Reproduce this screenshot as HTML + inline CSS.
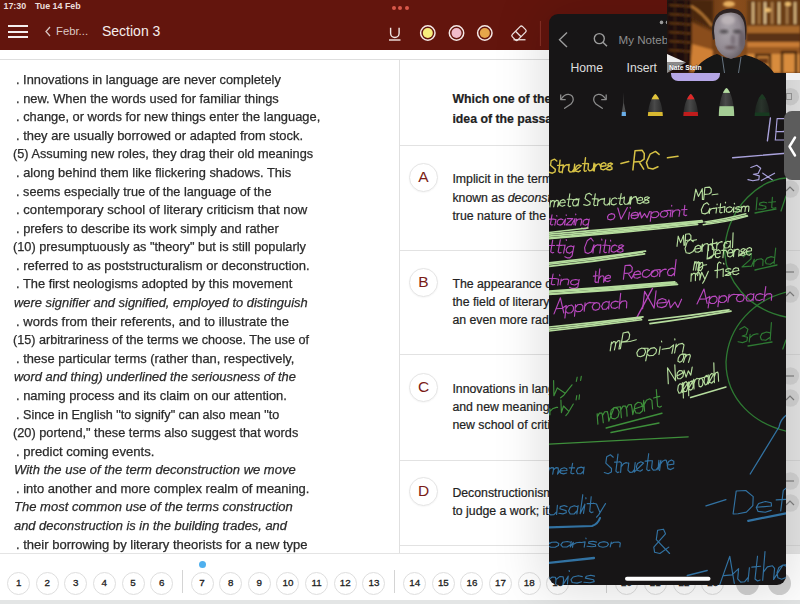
<!DOCTYPE html>
<html><head><meta charset="utf-8">
<style>
*{margin:0;padding:0;box-sizing:border-box}
html,body{width:800px;height:604px;overflow:hidden;background:#e3e5e5;font-family:"Liberation Sans",sans-serif;position:relative}
.abs{position:absolute}
#hdr{left:0;top:0;width:800px;height:50px;background:#63150d}
#strip{left:0;top:50px;width:800px;height:10px;background:#fff;border-bottom:1px solid #dedede}
#passage{left:0;top:60px;width:399px;height:493px;background:#fff}
#vdiv{left:399px;top:60px;width:1px;height:493px;background:#e0e0e0}
#qpanel{left:400px;top:60px;width:388px;height:493px;background:#fff}
.pl{position:absolute;transform-origin:0 0;font-size:12.6px;color:#2b2b2b;-webkit-text-stroke:0.25px #2b2b2b;white-space:nowrap;line-height:15px}
#nav{left:0;top:553px;width:800px;height:47px;background:#fff;border-top:1px solid #e4e4e4}
.nc{position:absolute;width:23px;height:23px;border-radius:50%;border:1.6px solid #dedede;font-size:9.8px;color:#222;-webkit-text-stroke:0.3px #222;text-align:center;line-height:20.5px;top:571.5px}
.st{position:absolute;color:#ecdedb;font-weight:bold;font-size:8.6px;top:0;line-height:12px}
.sep{position:absolute;left:400px;width:388px;height:1px;background:#e2e2e2}
.ql{position:absolute;font-size:12.3px;color:#222;-webkit-text-stroke:0.2px #222;white-space:nowrap;line-height:15px;left:452px}
.lc{position:absolute;width:29px;height:29px;border-radius:50%;border:1.5px solid #e4e4e4;color:#7a1c16;font-size:15.5px;text-align:center;line-height:26px;left:409px;box-shadow:0 0.5px 1.5px rgba(0,0,0,0.06)}
#panel{left:549px;top:14px;width:237px;height:571px;background:#171516;border-radius:9px;box-shadow:0 0 50px 8px rgba(0,0,0,0.13);overflow:hidden}
</style></head><body>
<div id="hdr" class="abs">
  <div class="st" style="left:3.5px;top:-0.3px;font-size:8.9px">17:30</div>
  <div class="st" style="left:35px;top:-0.3px;font-size:8.9px">Tue 14 Feb</div>
  <div class="abs" style="left:391.5px;top:5.5px;width:4px;height:4px;border-radius:50%;background:#d9584a"></div>
  <div class="abs" style="left:398px;top:5.5px;width:4px;height:4px;border-radius:50%;background:#d9584a"></div>
  <div class="abs" style="left:404.5px;top:5.5px;width:4px;height:4px;border-radius:50%;background:#d9584a"></div>
  <div class="abs" style="left:7.5px;top:25.4px;width:20px;height:2px;background:#f4eeee"></div>
  <div class="abs" style="left:7.5px;top:30.8px;width:20px;height:2px;background:#f4eeee"></div>
  <div class="abs" style="left:7.5px;top:36.3px;width:20px;height:2px;background:#f4eeee"></div>
  <svg class="abs" style="left:44px;top:26px" width="8" height="11"><path d="M6 1 L2 5.5 L6 10" stroke="#d8c4c0" stroke-width="1.3" fill="none"/></svg>
  <div class="abs" style="left:56px;top:25px;font-size:11.3px;color:#dcc8c4;line-height:13px">Febr...</div>
  <div class="abs" style="left:102px;top:23px;font-size:14px;color:#f6eeec;line-height:16px">Section 3</div>
  <svg class="abs" style="left:380px;top:15px" width="170" height="35">
    <path d="M10.6 12.7 V18.3 a4.25 4.25 0 0 0 8.5 0 V12.7" stroke="#f2e6e4" stroke-width="1.4" fill="none"/>
    <path d="M9 25 H20.5" stroke="#f2e6e4" stroke-width="1.4"/>
    <circle cx="47.8" cy="18" r="7.2" stroke="#f4e8e6" stroke-width="1.5" fill="none"/><circle cx="47.8" cy="18" r="5" fill="#f7ee7c"/>
    <circle cx="76.5" cy="18" r="7.2" stroke="#f4e8e6" stroke-width="1.5" fill="none"/><circle cx="76.5" cy="18" r="5" fill="#f1bccb"/>
    <circle cx="104.8" cy="18" r="7.2" stroke="#f4e8e6" stroke-width="1.5" fill="none"/><circle cx="104.8" cy="18" r="5" fill="#e6a64a"/>
    <g transform="translate(139 18.25) rotate(-45)"><rect x="-7.25" y="-3.9" width="14.5" height="7.8" rx="1.8" stroke="#f2e6e4" stroke-width="1.3" fill="none"/><path d="M-1 -3.9 V3.9" stroke="#f2e6e4" stroke-width="1.3"/></g>
    <path d="M133.5 24.75 H145.5" stroke="#f2e6e4" stroke-width="1.3"/>
    <path d="M160.4 6 V31" stroke="#8c3328" stroke-width="1"/>
  </svg>
</div>
<div id="strip" class="abs"></div>
<div id="passage" class="abs"></div>
<div id="vdiv" class="abs"></div>
<div id="qpanel" class="abs"></div>
<div class="pl" style="left:16.1px;top:73.08px;transform:scaleX(1.0167)">. Innovations in language are never completely</div>
<div class="pl" style="left:16.1px;top:91.66px;transform:scaleX(1.02)">. new. When the words used for familiar things</div>
<div class="pl" style="left:16.1px;top:110.24px;transform:scaleX(1.0224)">. change, or words for new things enter the language,</div>
<div class="pl" style="left:16.1px;top:128.82px;transform:scaleX(1.025)">. they are usually borrowed or adapted from stock.</div>
<div class="pl" style="left:13px;top:147.40px;transform:scaleX(1.0112)">(5) Assuming new roles, they drag their old meanings</div>
<div class="pl" style="left:16.1px;top:165.98px;transform:scaleX(1.0195)">. along behind them like flickering shadows. This</div>
<div class="pl" style="left:16.1px;top:184.56px;transform:scaleX(1.008)">. seems especially true of the language of the</div>
<div class="pl" style="left:16.1px;top:203.14px;transform:scaleX(1.0433)">. contemporary school of literary criticism that now</div>
<div class="pl" style="left:16.1px;top:221.72px;transform:scaleX(1.02)">. prefers to describe its work simply and rather</div>
<div class="pl" style="left:13px;top:240.30px;transform:scaleX(1.0139)">(10) presumptuously as "theory" but is still popularly</div>
<div class="pl" style="left:16.1px;top:258.88px;transform:scaleX(1.0335)">. referred to as poststructuralism or deconstruction.</div>
<div class="pl" style="left:16.1px;top:277.46px;transform:scaleX(1.0209)">. The first neologisms adopted by this movement</div>
<div class="pl" style="left:14px;top:296.04px;font-style:italic;transform:scaleX(1.0232)">were signifier and signified, employed to distinguish</div>
<div class="pl" style="left:16.1px;top:314.62px;transform:scaleX(1.0341)">. words from their referents, and to illustrate the</div>
<div class="pl" style="left:13px;top:333.20px;transform:scaleX(1.0027)">(15) arbitrariness of the terms we choose. The use of</div>
<div class="pl" style="left:16.1px;top:351.78px;transform:scaleX(1.0204)">. these particular terms (rather than, respectively,</div>
<div class="pl" style="left:14px;top:370.36px;font-style:italic;transform:scaleX(1.022)">word and thing) underlined the seriousness of the</div>
<div class="pl" style="left:16.1px;top:388.94px;transform:scaleX(1.0265)">. naming process and its claim on our attention.</div>
<div class="pl" style="left:16.1px;top:407.52px;transform:scaleX(1.0023)">. Since in English "to signify" can also mean "to</div>
<div class="pl" style="left:13px;top:426.10px;transform:scaleX(1.0129)">(20) portend," these terms also suggest that words</div>
<div class="pl" style="left:16.1px;top:444.68px;transform:scaleX(1.0403)">. predict coming events.</div>
<div class="pl" style="left:14px;top:463.26px;font-style:italic;transform:scaleX(1.0321)">With the use of the term deconstruction we move</div>
<div class="pl" style="left:16.1px;top:481.84px;transform:scaleX(1.0299)">. into another and more complex realm of meaning.</div>
<div class="pl" style="left:14px;top:500.42px;font-style:italic;transform:scaleX(1.0345)">The most common use of the terms construction</div>
<div class="pl" style="left:13.5px;top:519.00px;font-style:italic;transform:scaleX(1.0233)">and deconstruction is in the building trades, and</div>
<div class="pl" style="left:16.1px;top:537.58px;transform:scaleX(1.0337)">. their borrowing by literary theorists for a new type</div>
<div class="sep" style="top:145.0px"></div>
<div class="sep" style="top:250.0px"></div>
<div class="sep" style="top:354.2px"></div>
<div class="sep" style="top:459.5px"></div>
<div class="sep" style="top:545.0px"></div>
<div class="ql" style="left:452.4px;top:92.10px;font-weight:bold">Which one of the following most accurately</div>
<div class="ql" style="left:452.4px;top:111.90px;font-weight:bold">idea of the passage?</div>
<div class="lc" style="top:163.1px">A</div>
<div class="ql" style="left:452.4px;top:172.20px;">Implicit in the term construction is</div>
<div class="ql" style="left:452.4px;top:190.90px;">known as <i>deconstruction</i> and</div>
<div class="ql" style="left:452.4px;top:208.80px;">true nature of the word</div>
<div class="lc" style="top:267.8px">B</div>
<div class="ql" style="left:452.4px;top:276.80px;">The appearance of new words</div>
<div class="ql" style="left:452.4px;top:295.40px;">the field of literary criticism</div>
<div class="ql" style="left:452.4px;top:313.40px;">an even more radical</div>
<div class="lc" style="top:372.9px">C</div>
<div class="ql" style="left:452.4px;top:381.70px;">Innovations in language</div>
<div class="ql" style="left:452.4px;top:399.80px;">and new meanings</div>
<div class="ql" style="left:452.4px;top:418.00px;">new school of criticism</div>
<div class="lc" style="top:476.7px">D</div>
<div class="ql" style="left:452.4px;top:486.00px;">Deconstructionism</div>
<div class="ql" style="left:452.4px;top:504.40px;">to judge a work; it</div>
<div class="abs" style="left:786px;top:80px;width:14px;height:473px;background:#e6e6e6"></div>
<div class="abs" style="left:786px;top:145.0px;width:14px;height:1px;background:#d6d6d6"></div>
<div class="abs" style="left:786px;top:250.0px;width:14px;height:1px;background:#d6d6d6"></div>
<div class="abs" style="left:786px;top:354.2px;width:14px;height:1px;background:#d6d6d6"></div>
<div class="abs" style="left:786px;top:459.5px;width:14px;height:1px;background:#d6d6d6"></div>
<div class="abs" style="left:786px;top:545.0px;width:14px;height:1px;background:#d6d6d6"></div>
<svg class="abs" style="left:770px;top:60px" width="30" height="494" viewBox="770 60 30 494">
<circle cx="790.4" cy="96.7" r="8.7" fill="#d2d2d2"/><rect x="786.5" y="93.5" width="5" height="6" fill="none" stroke="#9a9a9a" stroke-width="1"/>
<circle cx="790.4" cy="167" r="8.7" fill="#d4d4d4"/><path d="M786 167 H794" stroke="#808080" stroke-width="1.2"/>
<circle cx="790.4" cy="189" r="8.7" fill="#d4d4d4"/><path d="M786 191 L790 187 L794 191" stroke="#808080" stroke-width="1.2" fill="none"/>
<circle cx="790.4" cy="272" r="8.7" fill="#d4d4d4"/><path d="M786 272 H794" stroke="#808080" stroke-width="1.2"/>
<circle cx="790.4" cy="294" r="8.7" fill="#d4d4d4"/><path d="M786 296 L790 292 L794 296" stroke="#808080" stroke-width="1.2" fill="none"/>
<circle cx="790.4" cy="376" r="8.7" fill="#d4d4d4"/><path d="M786 376 H794" stroke="#808080" stroke-width="1.2"/>
<circle cx="790.4" cy="398" r="8.7" fill="#d4d4d4"/><path d="M786 400 L790 396 L794 400" stroke="#808080" stroke-width="1.2" fill="none"/>
<circle cx="790.4" cy="481" r="8.7" fill="#d4d4d4"/><path d="M786 481 H794" stroke="#808080" stroke-width="1.2"/>
<circle cx="790.4" cy="503" r="8.7" fill="#d4d4d4"/><path d="M786 505 L790 501 L794 505" stroke="#808080" stroke-width="1.2" fill="none"/>
</svg>
<div id="nav" class="abs"></div>
<div class="nc" style="left:7.25px">1</div>
<div class="nc" style="left:35.70px">2</div>
<div class="nc" style="left:64.30px">3</div>
<div class="nc" style="left:92.80px">4</div>
<div class="nc" style="left:121.50px">5</div>
<div class="nc" style="left:150.20px">6</div>
<div class="nc" style="left:190.50px">7</div>
<div class="nc" style="left:219.15px">8</div>
<div class="nc" style="left:247.80px">9</div>
<div class="nc" style="left:276.45px">10</div>
<div class="nc" style="left:305.10px">11</div>
<div class="nc" style="left:333.75px">12</div>
<div class="nc" style="left:362.40px">13</div>
<div class="nc" style="left:403.25px">14</div>
<div class="nc" style="left:431.85px">15</div>
<div class="nc" style="left:460.45px">16</div>
<div class="nc" style="left:489.05px">17</div>
<div class="nc" style="left:517.65px">18</div>
<div class="nc" style="left:546.25px">19</div>
<div class="nc" style="left:615.00px">20</div>
<div class="nc" style="left:643.75px">21</div>
<div class="nc" style="left:672.50px">22</div>
<div class="nc" style="left:701.25px">23</div>
<div class="abs" style="left:182.1px;top:570px;width:1px;height:23px;background:#d4d4d4"></div>
<div class="abs" style="left:394.0px;top:570px;width:1px;height:23px;background:#d4d4d4"></div>
<div class="abs" style="left:198.5px;top:560.8px;width:7px;height:7px;border-radius:50%;background:#4fb0ee"></div>
<div class="abs" style="left:736.0px;top:571.5px;width:23px;height:23px;border-radius:50%;background:#d2d2d2"></div>
<div class="abs" style="left:767.5px;top:571.5px;width:23px;height:23px;border-radius:50%;background:#d2d2d2"></div>
<div class="abs" style="left:605.5px;top:570px;width:1px;height:23px;background:#d4d4d4"></div>
<div id="panel" class="abs">
<svg class="abs" style="left:0;top:0" width="237" height="571" viewBox="549 14 237 571">
<circle cx="661.5" cy="22.4" r="1.8" fill="#9a9a9a"/>
<circle cx="667.5" cy="22.4" r="1.8" fill="#9a9a9a"/>
<path d="M567 32.5 L559.5 39.8 L567 47" stroke="#9c9c9c" stroke-width="1.4" fill="none"/>
<circle cx="599.3" cy="38.6" r="5" stroke="#9c9c9c" stroke-width="1.4" fill="none"/><path d="M602.9 42.2 L607 46.3" stroke="#9c9c9c" stroke-width="1.5"/>
<text x="618.5" y="44.2" font-family="Liberation Sans" font-size="11.6" fill="#8e8e8e">My Notebook</text>
<text x="570.5" y="72" font-family="Liberation Sans" font-size="12.2" fill="#dedede">Home</text>
<text x="626.5" y="72" font-family="Liberation Sans" font-size="12.2" fill="#dedede">Insert</text>
<path d="M560.7 94.6 V99.6 H565.7" stroke="#8c8c8c" stroke-width="1.3" fill="none" stroke-linejoin="round"/>
<path d="M561.2 99 Q564.5 94 568.5 94.3 Q573.5 95 573.2 100 Q573 102 571 104 L564.6 108.3" stroke="#8c8c8c" stroke-width="1.3" fill="none" stroke-linecap="round"/>
<path d="M606.2 94.6 V99.6 H601.2" stroke="#8c8c8c" stroke-width="1.3" fill="none" stroke-linejoin="round"/>
<path d="M605.7 99 Q602.4 94 598.4 94.3 Q593.4 95 593.7 100 Q593.9 102 595.9 104 L602.3 108.3" stroke="#8c8c8c" stroke-width="1.3" fill="none" stroke-linecap="round"/>
<path d="M623.6 92 L623.9 103 L625.8 112.5 L621.8 112.5 L623.3 103 Z" fill="#505050"/><path d="M621.8 112 L625.8 112 L626 116 L621.6 116 Z" fill="#6aaee8"/>
<defs><linearGradient id="pg" x1="0" x2="1"><stop offset="0" stop-color="#252525"/><stop offset="0.45" stop-color="#4a4a4a"/><stop offset="1" stop-color="#262626"/></linearGradient><linearGradient id="pg2" x1="0" x2="1"><stop offset="0" stop-color="#1a221c"/><stop offset="0.45" stop-color="#2a342c"/><stop offset="1" stop-color="#1a201c"/></linearGradient></defs>
<clipPath id="pc1"><path d="M655.3499999999999 93.9 C656.8499999999999 94.4 662.5 101.9 662.8 116 L647.9 116 C648.1999999999999 101.9 653.8499999999999 94.4 655.3499999999999 93.9 Z"/></clipPath><g clip-path="url(#pc1)"><rect x="646.9" y="92.9" width="16.899999999999977" height="24.099999999999994" fill="url(#pg)"/><rect x="646.9" y="92.9" width="16.899999999999977" height="6.3999999999999915" fill="#e2c43a"/><rect x="646.9" y="112" width="16.899999999999977" height="4" fill="#d8b830"/></g>
<clipPath id="pc2"><path d="M690.75 93.9 C692.25 94.4 697.8000000000001 101.9 698.1 116 L683.4 116 C683.6999999999999 101.9 689.25 94.4 690.75 93.9 Z"/></clipPath><g clip-path="url(#pc2)"><rect x="682.4" y="92.9" width="16.700000000000045" height="24.099999999999994" fill="url(#pg)"/><rect x="682.4" y="92.9" width="16.700000000000045" height="6.3999999999999915" fill="#e02828"/><rect x="682.4" y="112" width="16.700000000000045" height="4" fill="#c01c1c"/></g>
<clipPath id="pc3"><path d="M726.5 88.1 C728.0 88.6 733.9000000000001 96.1 734.2 116 L718.8 116 C719.0999999999999 96.1 725.0 88.6 726.5 88.1 Z"/></clipPath><g clip-path="url(#pc3)"><rect x="717.8" y="87.1" width="17.40000000000009" height="29.900000000000006" fill="url(#pg)"/><rect x="717.8" y="87.1" width="17.40000000000009" height="5.800000000000011" fill="#b4dca0"/><rect x="717.8" y="106.2" width="17.40000000000009" height="9.799999999999997" fill="#a4cc94"/></g>
<clipPath id="pc4"><path d="M762.1500000000001 94.3 C763.6500000000001 94.8 769.3000000000001 102.3 769.6 116 L754.7 116 C755.0 102.3 760.6500000000001 94.8 762.1500000000001 94.3 Z"/></clipPath><g clip-path="url(#pc4)"><rect x="753.7" y="93.3" width="16.899999999999977" height="23.700000000000003" fill="url(#pg2)"/><rect x="753.7" y="93.3" width="16.899999999999977" height="6.0" fill="#1c3a22"/><rect x="753.7" y="112.5" width="16.899999999999977" height="3.5" fill="#173a20"/></g>
<path d="M556.8,161.0 554.6,159.2 551.2,160.7 550.5,165.3 555.4,169.4 555.0,171.9 552.4,173.2 548.9,172.3 M560.1,160.2 558.9,171.3 559.9,172.3 561.2,171.9 M557.6,165.4 561.5,165.2 M561.5,165.2 563.4,164.9 M563.4,164.9 562.2,172.7 M562.8,168.4 565.0,165.6 566.9,164.7 567.7,165.0 M567.7,165.0 569.2,164.4 M569.2,164.4 568.5,170.2 570.0,172.0 572.1,171.9 573.8,169.5 M574.7,164.1 573.8,171.8 M573.8,171.8 581.2,165.8 M581.2,165.8 579.0,164.9 576.5,166.1 575.4,168.5 575.7,171.1 578.4,171.8 580.3,170.7 M585.5,157.8 584.0,170.2 584.8,171.3 586.3,170.8 M582.5,163.6 586.9,163.4 M586.9,163.4 588.5,163.6 M588.5,163.6 588.0,169.0 589.4,170.7 591.2,170.6 593.1,168.4 M594.0,163.3 593.1,170.5 M593.1,170.5 595.1,164.1 M595.1,164.1 594.2,171.0 M594.7,167.2 596.8,164.7 598.6,163.9 599.5,164.2 M599.5,164.2 600.6,166.5 M600.6,166.5 606.0,165.8 605.8,163.7 603.9,162.7 601.4,163.9 600.6,166.5 601.0,169.2 603.4,169.9 605.8,168.7 M605.8,168.7 612.5,163.9 M612.5,163.9 610.7,163.0 608.3,163.8 607.8,165.6 611.8,167.2 612.1,169.0 609.6,170.0 607.0,169.5" stroke="#d6c145" stroke-width="1.4" fill="none" stroke-linecap="round" stroke-linejoin="round"/>
<path d="M621 163.5 L628.7 161.5" stroke="#d6c145" stroke-width="1.6" fill="none" stroke-linecap="round" stroke-linejoin="round"/>
<path d="M632.9,169.9 635.0,150.8 642.2,150.3 644.3,153.7 644.1,159.1 640.9,161.4 633.8,161.9 M638.9,161.5 643.7,169.2 M659.1,154.4 655.5,151.4 650.1,154.2 646.4,162.6 648.2,168.0 652.9,169.0 658.0,166.8" stroke="#d6c145" stroke-width="1.5" fill="none" stroke-linecap="round" stroke-linejoin="round"/>
<path d="M667.5 157.8 L678 156.3" stroke="#d6c145" stroke-width="1.6" fill="none" stroke-linecap="round" stroke-linejoin="round"/>
<path d="M770.4 118 L767.4 140.8" stroke="#aaa2dc" stroke-width="1.4" fill="none" stroke-linecap="round" stroke-linejoin="round"/>
<path d="M775.3,140.0 777.1,118.6 787.6,118.6 790.8,122.7 788.7,130.4 782.3,131.6 M775.8,131.6 786.7,131.6 790.3,134.4 788.9,138.3 785.5,140.0 775.2,140.0" stroke="#aaa2dc" stroke-width="1.15" fill="none" stroke-linecap="round" stroke-linejoin="round"/>
<path d="M732.6 157.7 L786 153.3" stroke="#aaa2dc" stroke-width="1.4" fill="none" stroke-linecap="round" stroke-linejoin="round"/>
<path d="M750.8,167.5 756.8,165.3 760.7,168.3 758.1,173.5 753.4,174.3 759.3,175.9 758.8,179.6 752.9,180.8 747.9,179.6 M762.8,173.2 773.4,180.6 M774.6,173.2 761.3,180.6" stroke="#aaa2dc" stroke-width="1.15" fill="none" stroke-linecap="round" stroke-linejoin="round"/>
<path d="M786 178 C760 180 730 205 725 245 C722 280 750 310 786 317" stroke="#2e7a33" stroke-width="1.3" fill="none" stroke-linecap="round" stroke-linejoin="round"/>
<path d="M786.5 292 C755 300 728 325 726 362 C726 400 755 425 790 432" stroke="#2e7a33" stroke-width="1.3" fill="none" stroke-linecap="round" stroke-linejoin="round"/>
<path d="M781 211 L786 196" stroke="#2e7a33" stroke-width="1.3" fill="none" stroke-linecap="round" stroke-linejoin="round"/>
<path d="M782.8 349 L786 340" stroke="#2e7a33" stroke-width="1.3" fill="none" stroke-linecap="round" stroke-linejoin="round"/>
<path d="M757.1,197.6 756.1,209.8 M766.7,202.8 763.5,202.0 759.8,203.1 759.4,204.9 765.7,206.3 766.0,208.1 762.7,209.3 758.2,209.0 M772.4,197.4 771.7,207.4 773.4,208.2 775.8,207.7 M768.7,202.3 775.4,201.7" stroke="#2e7a33" stroke-width="1.15" fill="none" stroke-linecap="round" stroke-linejoin="round"/>
<path d="M755 213 L776 209" stroke="#2e7a33" stroke-width="1.3" fill="none" stroke-linecap="round" stroke-linejoin="round"/>
<path d="M743.6,256.9 747.3,252.6 751.3,253.6 751.0,258.9 742.0,266.9 751.5,266.1 M751.5,266.1 754.3,259.3 M754.3,259.3 753.6,266.3 M754.2,262.1 757.0,259.5 761.2,258.7 763.1,260.0 762.8,265.5 M774.3,257.5 771.1,256.6 767.0,258.1 765.2,261.0 766.2,263.8 770.3,264.3 774.1,261.7 M775.7,248.0 774.1,264.0" stroke="#2e7a33" stroke-width="1.15" fill="none" stroke-linecap="round" stroke-linejoin="round"/>
<path d="M755 270 L777 265" stroke="#2e7a33" stroke-width="1.3" fill="none" stroke-linecap="round" stroke-linejoin="round"/>
<path d="M739.8,329.3 744.6,326.6 747.9,329.3 746.2,334.8 742.2,336.0 747.5,337.2 746.9,341.0 742.6,342.6 738.1,341.7 M750.1,334.4 749.2,341.9 M749.8,337.8 753.0,334.9 756.9,333.8 758.2,334.0 M770.2,332.9 766.5,332.0 762.0,333.6 760.3,336.7 761.4,339.7 765.8,340.3 769.8,337.5 M771.4,322.6 770.2,340.0" stroke="#2e7a33" stroke-width="1.15" fill="none" stroke-linecap="round" stroke-linejoin="round"/>
<path d="M748 346 L772 342" stroke="#2e7a33" stroke-width="1.3" fill="none" stroke-linecap="round" stroke-linejoin="round"/>
<path d="M550.8,200.5 549.9,206.9 M550.7,202.4 552.5,200.5 554.3,200.7 554.4,203.0 553.7,206.8 M554.4,202.3 556.6,200.3 558.1,200.6 558.4,202.8 557.6,206.7 M557.6,206.7 559.5,203.0 M559.5,203.0 565.2,202.5 564.9,200.5 563.2,199.6 560.7,200.7 559.6,203.0 560.1,205.5 562.4,206.3 564.8,205.2 M569.8,193.9 568.1,205.5 569.4,206.6 570.7,206.2 M567.2,199.3 571.2,199.2 M571.2,199.2 578.7,199.7 M578.7,199.7 576.8,198.7 573.8,199.9 572.5,203.1 573.4,205.8 576.1,205.9 578.2,203.3 M579.0,198.6 577.9,205.8 M591.7,194.9 589.2,193.2 586.2,194.5 585.0,198.6 590.2,202.2 589.9,204.4 586.9,205.5 583.7,204.6 M595.3,193.9 593.7,204.7 594.6,205.7 596.2,205.3 M592.3,198.9 596.5,198.8 M596.5,198.8 598.2,199.0 M598.2,199.0 597.5,205.4 M597.8,201.9 600.1,199.6 602.3,198.9 603.1,199.2 M603.1,199.2 604.6,198.3 M604.6,198.3 603.9,203.4 605.4,205.0 607.4,205.0 609.3,202.9 M610.0,198.1 609.3,204.9 M616.8,198.7 615.0,197.7 612.4,198.8 611.0,201.4 611.3,204.1 613.8,204.9 616.3,203.7 M621.2,193.6 619.6,203.7 620.7,204.7 622.3,204.3 M618.4,198.3 622.5,198.2 M622.5,198.2 624.5,197.1 M624.5,197.1 623.8,202.5 625.2,204.3 627.4,204.2 629.3,202.0 M630.2,196.9 628.9,204.2 M628.9,204.2 631.5,196.7 M631.5,196.7 630.4,204.1 M631.1,200.0 633.3,197.4 635.5,196.6 636.2,196.9 M636.2,196.9 637.1,200.5 M637.1,200.5 642.5,200.0 642.5,198.1 640.5,197.2 638.2,198.2 637.1,200.5 637.4,203.0 639.9,203.7 642.1,202.6 M642.1,202.6 649.4,197.7 M649.4,197.7 647.3,196.8 644.9,197.6 644.5,199.2 648.7,200.8 648.9,202.4 646.6,203.3 643.5,202.8" stroke="#b6dd9e" stroke-width="1.15" fill="none" stroke-linecap="round" stroke-linejoin="round"/>
<path d="M693.8,200.3 695.8,189.2 698.4,196.4 702.3,188.7 702.4,199.5 M702.4,199.5 703.7,199.4 M703.7,199.4 704.9,187.5 709.6,187.1 711.3,189.2 711.1,192.5 709.0,194.0 704.4,194.4 M712.2,194.8 717.9,194.0" stroke="#b6dd9e" stroke-width="1.15" fill="none" stroke-linecap="round" stroke-linejoin="round"/>
<path d="M708.8,204.7 706.9,202.7 703.8,204.4 701.3,209.7 702.0,213.2 704.9,213.9 708.0,212.6 M708.0,212.6 709.9,208.4 M709.9,208.4 709.3,213.5 M709.6,210.7 711.4,208.8 713.5,208.2 714.3,208.4 M714.3,208.4 716.7,207.8 M716.7,207.8 716.0,213.0 M717.1,204.0 717.1,204.7 M720.6,203.7 719.7,212.1 720.7,212.9 722.1,212.5 M718.1,207.7 722.3,207.4 M722.3,207.4 725.0,206.5 M725.0,206.5 724.3,212.5 M725.4,202.2 725.6,203.0 M731.6,207.6 729.8,206.8 727.1,207.8 726.1,209.8 726.7,211.8 728.9,212.4 731.3,211.4 M731.3,211.4 734.0,207.0 M734.0,207.0 733.4,212.2 M734.3,203.3 734.6,203.9 M740.4,207.3 738.3,206.6 736.1,207.2 735.6,208.6 739.8,209.9 739.8,211.3 737.6,212.1 734.8,211.7 M741.8,206.3 741.0,211.8 M741.7,208.0 743.5,206.2 745.1,206.4 745.4,208.3 744.9,211.6 M745.2,207.8 747.2,206.0 748.8,206.2 748.9,208.1 748.5,211.4" stroke="#b6dd9e" stroke-width="1.15" fill="none" stroke-linecap="round" stroke-linejoin="round"/>
<path d="M704.9 221.9 Q727.0 218.8 745.9 213.8" stroke="#b6dd9e" stroke-width="1.4" fill="none" stroke-linecap="round" stroke-linejoin="round"/>
<path d="M706.2 223.0 Q727.0 220.5 747.2 215.5" stroke="#b6dd9e" stroke-width="1.4" fill="none" stroke-linecap="round" stroke-linejoin="round"/>
<path d="M703.2 224.7 Q727.0 222.2 747.6 216.2" stroke="#b6dd9e" stroke-width="1.4" fill="none" stroke-linecap="round" stroke-linejoin="round"/>
<path d="M552.0,214.8 550.4,224.1 551.6,225.0 552.8,224.7 M549.2,219.1 553.3,219.1 M553.3,219.1 556.0,219.5 M556.0,219.5 554.8,225.1 M556.7,215.5 556.9,216.2 M563.0,219.8 561.2,218.9 558.3,219.8 557.1,222.0 557.4,224.3 560.1,225.1 562.4,224.1 M562.4,224.1 565.5,219.1 M565.5,219.1 564.5,225.0 M566.2,214.8 566.3,215.5 M567.3,218.6 572.8,218.6 566.0,224.8 571.5,224.8 M571.5,224.8 575.0,218.5 M575.0,218.5 573.9,224.8 M575.7,214.0 575.8,214.8 M576.5,218.9 575.4,225.1 M576.1,221.4 578.3,219.2 580.9,218.9 581.8,220.1 580.8,225.1 M588.9,220.0 586.8,219.1 584.1,220.0 582.9,222.2 583.2,224.5 585.6,225.2 588.4,223.4 M589.2,219.1 587.7,227.3 586.0,228.8 583.4,228.8 581.8,227.9" stroke="#b848be" stroke-width="1.15" fill="none" stroke-linecap="round" stroke-linejoin="round"/>
<path d="M611.5,213.6 608.7,214.7 607.5,216.9 608.0,219.3 610.6,219.9 613.5,219.0 614.9,216.6 614.2,214.4 611.5,213.6 M617.8,208.0 621.0,219.2 627.4,207.5 M629.4,212.2 628.5,219.1 M630.2,207.3 630.4,208.1 M631.0,215.6 637.9,214.9 637.8,213.0 635.3,212.2 632.2,213.3 631.0,215.6 631.7,218.0 634.8,218.6 637.6,217.5 M637.6,217.5 640.1,212.0 M640.1,212.0 641.5,218.0 644.5,213.6 647.0,217.7 649.6,211.5 M649.6,211.5 651.3,211.8 M651.3,211.8 650.3,221.2 M651.0,214.1 653.4,212.0 656.9,211.5 658.8,213.1 658.5,215.5 656.2,217.4 652.7,217.6 650.8,216.2 M664.3,210.7 661.6,211.8 660.2,214.2 661.1,216.6 663.7,217.2 666.4,216.3 667.9,213.8 667.1,211.6 664.3,210.7 M664.3,210.7 671.1,210.1 M671.1,210.1 670.1,216.8 M671.7,205.3 671.7,206.1 M672.9,210.1 672.1,216.6 M672.6,212.7 675.0,210.3 678.4,209.8 679.9,211.0 679.0,216.3 M684.8,205.3 683.8,214.8 685.2,215.6 686.7,215.2 M681.6,209.8 687.0,209.5" stroke="#b848be" stroke-width="1.15" fill="none" stroke-linecap="round" stroke-linejoin="round"/>
<path d="M545.5 234.3 Q623.0 228.5 702.0 220.6" stroke="#b6dd9e" stroke-width="1.7" fill="none" stroke-linecap="round" stroke-linejoin="round"/>
<path d="M546.8 236.3 Q623.0 230.0 702.7 221.9" stroke="#b6dd9e" stroke-width="1.7" fill="none" stroke-linecap="round" stroke-linejoin="round"/>
<path d="M548.9 238.2 Q623.0 231.5 697.3 222.8" stroke="#b6dd9e" stroke-width="1.7" fill="none" stroke-linecap="round" stroke-linejoin="round"/>
<path d="M543.9 239.0 Q623.0 233.0 697.7 224.5" stroke="#b6dd9e" stroke-width="1.7" fill="none" stroke-linecap="round" stroke-linejoin="round"/>
<path d="M548 232.5 L588 228" stroke="#b6dd9e" stroke-width="1.5" fill="none" stroke-linecap="round" stroke-linejoin="round"/>
<path d="M552.7,240.2 550.7,251.8 552.2,252.9 553.7,252.5 M549.4,245.5 554.6,245.5 M560.3,239.8 558.1,251.8 559.5,253.0 561.1,252.6 M556.7,245.3 561.7,245.3 M561.7,245.3 565.1,245.2 M565.1,245.2 563.6,253.1 M566.2,239.5 566.4,240.5 M573.5,247.0 571.2,245.9 567.8,247.0 566.1,249.6 566.9,252.4 569.6,253.3 572.8,251.1 M574.0,245.9 572.0,255.9 569.9,257.8 567.0,257.8 564.9,256.7" stroke="#b848be" stroke-width="1.15" fill="none" stroke-linecap="round" stroke-linejoin="round"/>
<path d="M593.2,241.0 591.0,238.1 587.4,240.4 584.6,247.6 585.2,252.4 588.1,253.5 591.5,251.7 M591.5,251.7 594.0,244.8 M594.0,244.8 592.9,252.9 M593.4,248.5 595.6,245.6 597.8,244.7 598.7,245.1 M598.7,245.1 600.9,244.9 M600.9,244.9 599.8,253.0 M601.7,239.1 601.9,240.1 M605.7,239.9 603.8,251.6 605.2,252.7 606.5,252.3 M602.8,245.3 606.9,245.2 M606.9,245.2 609.9,245.5 M609.9,245.5 608.9,252.8 M610.5,240.2 610.7,241.1 M617.0,245.9 615.1,244.9 612.3,246.1 611.1,248.7 611.3,251.4 613.8,252.2 616.5,251.0 M616.5,251.0 623.7,245.8 M623.7,245.8 621.8,244.7 619.1,245.5 618.6,247.4 622.9,249.3 623.0,251.3 620.5,252.3 617.6,251.6" stroke="#b848be" stroke-width="1.15" fill="none" stroke-linecap="round" stroke-linejoin="round"/>
<path d="M544.1 263.4 Q595.5 258.0 645.5 251.1" stroke="#b6dd9e" stroke-width="1.7" fill="none" stroke-linecap="round" stroke-linejoin="round"/>
<path d="M546.3 264.5 Q595.5 259.8 642.4 252.1" stroke="#b6dd9e" stroke-width="1.7" fill="none" stroke-linecap="round" stroke-linejoin="round"/>
<path d="M547.1 266.5 Q595.5 261.5 644.6 253.8" stroke="#b6dd9e" stroke-width="1.7" fill="none" stroke-linecap="round" stroke-linejoin="round"/>
<path d="M677.0,246.3 678.2,236.2 680.6,242.6 683.5,235.4 684.0,245.3 M684.0,245.3 685.1,245.1 M685.1,245.1 685.6,234.3 689.4,233.8 690.9,235.6 690.9,238.6 689.2,240.0 685.4,240.5 M691.9,240.6 696.5,239.7" stroke="#b6dd9e" stroke-width="1.15" fill="none" stroke-linecap="round" stroke-linejoin="round"/>
<path d="M693.3,241.7 690.6,239.4 687.2,241.9 685.0,248.6 686.2,252.8 689.4,253.4 693.1,251.4 M693.1,251.4 694.4,249.3 M694.4,249.3 700.9,248.0 700.3,246.0 698.1,245.2 695.5,246.7 694.6,249.3 695.3,251.9 698.2,252.3 700.6,250.9 M700.6,250.9 702.4,244.2 M702.4,244.2 702.0,251.5 M702.3,247.1 704.3,244.3 707.2,243.5 708.5,244.8 708.5,250.6 M712.7,239.0 712.3,249.3 713.8,250.1 715.4,249.5 M710.3,244.0 715.0,243.4 M715.0,243.4 717.0,242.2 M717.0,242.2 716.6,249.6 M716.9,245.5 718.9,242.7 721.5,241.6 722.2,241.9 M730.1,241.9 727.8,241.3 724.7,242.7 723.8,245.7 725.1,248.0 728.1,247.7 730.0,245.2 M730.4,240.9 730.1,247.4 M733.1,232.8 732.5,247.4" stroke="#b6dd9e" stroke-width="1.15" fill="none" stroke-linecap="round" stroke-linejoin="round"/>
<path d="M707.1,259.0 708.3,244.7 711.3,244.4 713.8,248.2 713.8,253.9 711.5,257.8 708.7,258.8 707.0,259.0 M707.0,259.0 715.2,254.0 M715.2,254.0 720.3,253.2 720.0,250.8 718.3,249.7 715.7,251.2 715.2,254.0 715.7,257.1 718.0,257.8 720.0,256.5 M726.9,243.4 725.5,242.3 724.3,244.3 722.9,257.6 M721.8,250.4 725.9,250.1 M725.9,250.1 727.4,253.3 M727.4,253.3 732.6,252.4 732.3,250.1 730.6,249.1 728.4,250.5 727.3,253.3 727.9,256.2 730.1,257.0 732.5,255.6 M732.5,255.6 734.2,249.4 M734.2,249.4 733.5,256.7 M734.0,252.3 735.7,249.6 738.0,249.1 739.3,250.4 738.6,256.2 M738.6,256.2 745.4,249.4 M745.4,249.4 743.3,248.5 741.4,249.4 740.8,251.2 744.4,252.8 745.0,254.6 742.7,255.7 739.9,255.2 M739.9,255.2 746.3,251.6 M746.3,251.6 751.5,250.8 751.5,248.5 749.6,247.5 747.1,248.8 746.3,251.6 746.9,254.5 749.2,255.3 751.1,253.9" stroke="#b6dd9e" stroke-width="1.15" fill="none" stroke-linecap="round" stroke-linejoin="round"/>
<path d="M694.8,261.7 693.3,270.1 M694.5,264.3 695.9,261.7 697.0,262.2 696.5,265.1 695.7,270.1 M696.6,264.3 698.2,261.7 698.9,262.2 698.7,265.1 697.7,270.1 M697.7,270.1 699.9,262.3 M699.9,262.3 697.6,275.7 M699.3,265.6 701.0,262.7 702.5,262.3 702.8,264.8 702.5,268.1 700.7,270.6 699.6,270.6 698.8,268.5 M698.8,268.5 703.5,265.2 M703.5,265.2 706.6,264.7" stroke="#b6dd9e" stroke-width="1.15" fill="none" stroke-linecap="round" stroke-linejoin="round"/>
<path d="M691.3,273.5 690.9,281.3 M691.1,275.9 693.2,273.3 695.2,273.4 695.5,276.0 695.4,280.6 M695.4,275.2 697.5,272.7 699.5,272.8 700.1,275.4 699.7,280.0 M699.7,280.0 701.7,272.3 M701.7,272.3 704.7,278.8 M708.3,271.4 704.1,280.9 702.6,283.2 M720.9,263.1 719.2,262.0 717.6,264.2 717.1,277.7 M714.9,270.6 720.4,269.8 M720.4,269.8 723.3,268.8 M723.3,268.8 723.1,276.5 M723.6,263.2 723.9,264.1 M730.8,269.1 728.4,268.4 726.0,269.5 725.6,271.3 730.4,272.5 730.8,274.3 728.4,275.5 725.1,275.3 M725.1,275.3 732.4,271.7 M732.4,271.7 738.8,270.5 738.4,268.4 735.8,267.7 733.4,269.1 732.6,271.7 733.3,274.3 736.2,274.7 738.8,273.3" stroke="#b6dd9e" stroke-width="1.15" fill="none" stroke-linecap="round" stroke-linejoin="round"/>
<path d="M553.1,274.0 551.2,283.9 552.9,284.8 554.8,284.5 M549.3,278.5 555.2,278.5 M555.2,278.5 558.7,279.2 M558.7,279.2 557.8,285.2 M559.6,274.9 559.9,275.7 M561.2,279.0 560.1,284.8 M560.8,281.3 563.7,279.3 567.2,279.0 568.9,280.2 567.9,284.8 M578.8,280.3 575.8,279.5 571.9,280.3 570.5,282.2 571.3,284.3 574.8,285.0 578.2,283.3 M579.2,279.5 577.8,286.9 575.4,288.3 571.7,288.3 569.5,287.4" stroke="#b848be" stroke-width="1.15" fill="none" stroke-linecap="round" stroke-linejoin="round"/>
<path d="M595.9,271.2 595.0,281.5 595.9,282.5 597.1,282.1 M593.4,276.1 597.4,275.8 M599.8,268.9 598.2,282.7 M598.9,278.7 600.6,276.3 603.0,275.8 604.0,277.0 603.6,282.3 M603.6,282.3 605.2,278.6 M605.2,278.6 610.3,277.9 610.4,276.0 608.4,275.2 606.0,276.3 605.1,278.6 605.6,281.0 608.1,281.6 610.1,280.5" stroke="#b848be" stroke-width="1.15" fill="none" stroke-linecap="round" stroke-linejoin="round"/>
<path d="M623.4,279.2 625.1,265.5 630.3,265.1 632.3,267.6 631.9,271.5 629.4,273.1 624.2,273.4 M628.0,273.2 631.6,278.6 M631.6,278.6 633.4,274.9 M633.4,274.9 640.5,274.1 640.1,271.9 637.8,270.9 634.7,272.3 633.4,274.9 634.2,277.7 637.3,278.3 640.3,277.0 M649.4,270.5 646.9,269.5 643.6,270.9 642.1,273.7 643.1,276.6 646.2,277.4 648.8,276.0 M648.8,276.0 654.8,270.0 M654.8,270.0 652.0,271.2 650.9,273.6 651.8,276.1 654.1,276.8 657.0,275.8 658.2,273.1 657.3,270.9 654.8,270.0 M654.8,270.0 660.2,269.5 M660.2,269.5 659.6,276.4 M660.0,272.6 662.5,270.0 665.0,269.1 666.3,269.4 M674.6,269.1 672.2,268.1 668.8,269.5 667.4,272.3 668.2,275.1 671.4,275.8 674.3,273.3 M676.1,259.6 674.3,275.6" stroke="#b848be" stroke-width="1.15" fill="none" stroke-linecap="round" stroke-linejoin="round"/>
<path d="M545.7 291.4 Q611.0 287.0 674.8 281.8" stroke="#b6dd9e" stroke-width="1.7" fill="none" stroke-linecap="round" stroke-linejoin="round"/>
<path d="M544.5 292.4 Q611.0 288.3 676.4 283.0" stroke="#b6dd9e" stroke-width="1.7" fill="none" stroke-linecap="round" stroke-linejoin="round"/>
<path d="M547.4 294.2 Q611.0 289.7 674.7 283.0" stroke="#b6dd9e" stroke-width="1.7" fill="none" stroke-linecap="round" stroke-linejoin="round"/>
<path d="M545.5 294.6 Q611.0 291.0 677.5 284.4" stroke="#b6dd9e" stroke-width="1.7" fill="none" stroke-linecap="round" stroke-linejoin="round"/>
<path d="M554.0,313.9 560.4,297.8 563.8,313.0 M556.7,308.7 562.2,308.3 M562.2,308.3 566.3,305.5 M566.3,305.5 564.9,318.0 M566.1,308.6 568.5,305.7 571.7,305.0 573.5,307.2 573.3,310.3 571.0,312.8 567.8,313.1 565.6,311.3 M575.5,304.7 574.5,316.2 M575.3,307.6 577.6,304.8 581.1,304.2 582.9,306.2 582.7,309.1 580.4,311.4 577.1,311.7 575.1,310.1 M585.1,302.9 584.2,311.1 M584.8,306.5 587.0,303.5 589.9,302.4 590.9,302.8 M590.9,302.8 596.6,302.5 M596.6,302.5 593.6,303.9 592.2,306.7 593.3,309.6 595.7,310.3 598.8,309.1 600.0,306.1 599.1,303.4 596.4,302.5 M609.1,302.4 606.2,301.5 603.2,302.9 601.6,306.5 602.8,309.3 606.3,309.1 608.8,306.2 M609.3,301.2 608.6,308.9 M618.3,301.9 615.4,301.1 612.0,302.5 610.7,305.2 611.7,307.8 615.0,308.4 617.8,307.1 M620.7,293.3 619.1,308.6 M619.7,304.1 621.9,301.4 625.4,300.7 626.8,302.1 626.5,307.9" stroke="#b848be" stroke-width="1.15" fill="none" stroke-linecap="round" stroke-linejoin="round"/>
<path d="M652.4 288.5 L635.5 320" stroke="#b848be" stroke-width="1.5" fill="none" stroke-linecap="round" stroke-linejoin="round"/>
<path d="M642.6,308.7 644.6,291.4 654.1,308.1 656.1,290.8 M657.0,303.3 666.2,302.4 665.8,299.7 662.2,298.5 658.4,300.1 656.8,303.4 657.8,306.8 661.9,307.6 665.8,306.1 M665.8,306.1 668.9,299.9 M668.9,299.9 670.4,307.8 675.0,302.0 677.9,307.4 681.6,299.2" stroke="#b848be" stroke-width="1.15" fill="none" stroke-linecap="round" stroke-linejoin="round"/>
<path d="M697.0,303.9 704.0,289.0 707.1,303.4 M699.9,299.1 705.5,298.9 M705.5,298.9 709.8,296.4 M709.8,296.4 708.1,308.0 M709.5,299.3 712.0,296.6 715.4,296.1 717.1,298.1 716.8,301.1 714.4,303.4 711.1,303.5 708.9,301.8 M719.3,295.9 717.9,306.6 M719.0,298.6 721.4,296.1 724.9,295.6 726.8,297.5 726.5,300.2 724.1,302.3 720.7,302.5 718.7,300.9 M729.1,294.4 727.9,302.1 M728.7,297.9 731.1,295.1 734.0,294.2 735.1,294.5 M735.1,294.5 740.9,294.4 M740.9,294.4 737.8,295.7 736.3,298.3 737.3,301.0 739.8,301.7 742.9,300.7 744.2,297.9 743.4,295.4 740.7,294.4 M753.6,294.7 750.8,293.8 747.6,295.0 745.9,298.3 747.1,301.0 750.6,300.9 753.3,298.3 M753.9,293.6 753.0,300.8 M763.1,294.5 760.1,293.6 756.7,294.8 755.2,297.3 756.2,299.9 759.5,300.5 762.5,299.3 M765.8,286.5 763.8,300.7 M764.5,296.6 766.8,294.1 770.4,293.6 771.8,294.9 771.3,300.3" stroke="#b848be" stroke-width="1.15" fill="none" stroke-linecap="round" stroke-linejoin="round"/>
<path d="M543.2 327.6 Q594.0 322.8 643.0 316.9" stroke="#b6dd9e" stroke-width="1.6" fill="none" stroke-linecap="round" stroke-linejoin="round"/>
<path d="M548.3 329.2 Q594.0 324.5 640.9 318.1" stroke="#b6dd9e" stroke-width="1.6" fill="none" stroke-linecap="round" stroke-linejoin="round"/>
<path d="M546.5 331.2 Q594.0 326.2 641.7 319.8" stroke="#b6dd9e" stroke-width="1.6" fill="none" stroke-linecap="round" stroke-linejoin="round"/>
<path d="M648.8 320.2 Q688.5 316.0 729.0 309.9" stroke="#b6dd9e" stroke-width="1.6" fill="none" stroke-linecap="round" stroke-linejoin="round"/>
<path d="M649.9 323.6 Q688.5 318.5 731.0 311.1" stroke="#b6dd9e" stroke-width="1.6" fill="none" stroke-linecap="round" stroke-linejoin="round"/>
<path d="M611.5,342.1 610.2,350.8 M610.9,344.7 613.6,341.6 615.2,341.7 615.6,344.6 614.4,350.0 M615.6,343.7 618.2,340.6 619.9,340.7 619.9,343.7 618.9,349.0 M618.9,349.0 620.4,348.7 M620.4,348.7 623.1,333.0 628.2,331.9 629.7,334.5 629.0,338.9 626.5,341.1 621.7,342.1 M621.7,342.1 629.9,341.5 M629.9,341.5 636.2,339.7" stroke="#b6dd9e" stroke-width="1.15" fill="none" stroke-linecap="round" stroke-linejoin="round"/>
<path d="M642.0,348.0 638.6,349.6 636.8,352.8 637.6,356.0 640.5,356.7 643.9,355.4 645.6,351.9 644.8,349.0 641.8,348.0 M641.8,348.0 648.1,348.3 M648.1,348.3 645.7,360.8 M647.8,351.4 650.7,348.4 654.4,347.6 656.6,349.7 655.9,352.8 653.2,355.4 649.3,355.8 647.1,354.1 M660.2,346.7 659.0,354.5 M661.5,341.1 661.7,342.0 M662.2,349.3 669.7,348.1 M669.7,348.1 673.6,344.9 M673.6,344.9 671.9,353.4 M674.8,338.8 674.9,339.9 M676.2,344.1 674.6,353.0 M675.5,347.6 678.7,344.2 682.4,343.4 684.0,345.0 682.6,352.1" stroke="#b6dd9e" stroke-width="1.15" fill="none" stroke-linecap="round" stroke-linejoin="round"/>
<path d="M682.3,353.9 679.9,355.2 678.3,358.1 677.9,361.3 679.8,362.3 681.8,361.3 683.5,358.1 683.7,355.2 682.0,353.9 M682.0,353.9 686.0,354.4 M686.0,354.4 683.4,362.3 M685.1,357.5 687.4,354.7 689.8,354.4 690.4,355.9 688.5,362.3" stroke="#b6dd9e" stroke-width="1.15" fill="none" stroke-linecap="round" stroke-linejoin="round"/>
<path d="M668.3,383.7 667.5,367.8 675.6,380.7 674.8,364.9 M676.9,375.9 682.7,373.1 682.1,370.8 679.6,370.5 677.4,372.7 676.8,376.0 677.9,378.8 680.6,378.7 683.0,376.5 M683.0,376.5 684.1,370.3 M684.1,370.3 686.1,377.1 688.3,370.9 690.8,375.1 692.2,367.1" stroke="#b6dd9e" stroke-width="1.15" fill="none" stroke-linecap="round" stroke-linejoin="round"/>
<path d="M681.7,384.6 680.1,383.7 678.3,385.7 677.7,390.1 679.0,393.2 680.9,392.8 682.2,389.1 M682.2,383.0 682.4,392.3 M682.4,392.3 682.9,382.7 M682.9,382.7 683.4,398.0 M683.3,386.4 684.2,382.8 686.2,381.6 687.5,384.1 687.7,387.9 686.5,391.2 684.5,391.8 683.3,389.8 M683.3,389.8 688.5,382.0 M688.5,382.0 688.7,395.7 M688.8,385.3 689.7,382.0 691.7,380.9 692.9,383.1 693.2,386.5 692.0,389.4 690.1,390.1 688.6,388.4 M688.6,388.4 693.9,379.4 M693.9,379.4 694.0,388.9 M694.0,383.7 695.2,379.9 696.9,378.4 697.6,378.7 M697.6,378.7 700.5,378.3 M700.5,378.3 698.9,380.2 698.7,383.3 699.2,386.4 700.9,386.9 702.5,385.3 703.1,381.8 702.3,379.1 700.6,378.3 M700.6,378.3 708.0,376.3 M708.0,376.3 706.4,375.4 704.5,377.4 704.0,381.7 705.1,384.9 706.7,384.5 708.2,380.8 M708.2,374.8 708.2,384.0 M708.2,384.0 713.4,374.3 M713.4,374.3 711.8,373.4 709.7,375.5 709.1,379.1 709.9,382.5 711.8,383.1 713.4,381.1 M713.8,362.8 714.4,382.6 M714.3,376.9 715.5,373.1 717.6,372.0 718.2,373.7 718.6,381.2" stroke="#b6dd9e" stroke-width="1.15" fill="none" stroke-linecap="round" stroke-linejoin="round"/>
<path d="M690.6 397.5 L726 387" stroke="#b6dd9e" stroke-width="1.5" fill="none" stroke-linecap="round" stroke-linejoin="round"/>
<path d="M553.6,380.6 553.9,395.7 M553.9,395.7 557.3,387.9 M557.3,387.9 564.8,392.9 M572.0,384.8 563.8,395.2 560.6,397.8 M577.2,377.2 576.3,381.4 M581.3,376.3 580.6,380.5" stroke="#3e8f3b" stroke-width="1.15" fill="none" stroke-linecap="round" stroke-linejoin="round"/>
<path d="M549.9,408.7 549.9,414.8 M550.0,411.4 552.5,408.8 556.3,407.4 557.6,407.4 M560.9,400.1 561.4,412.6 M561.4,412.6 563.5,406.0 M563.5,406.0 568.6,411.2 M573.3,404.0 567.9,413.2 565.8,415.6 M576.8,395.5 576.1,399.9 M579.5,394.9 579.0,399.3" stroke="#3e8f3b" stroke-width="1.15" fill="none" stroke-linecap="round" stroke-linejoin="round"/>
<path d="M597.1,413.7 597.9,424.1 M597.3,416.9 599.4,413.1 601.9,413.0 602.6,416.5 603.3,422.7 M602.6,415.4 604.7,411.7 607.3,411.5 608.2,415.0 608.8,421.2 M608.8,421.2 614.2,407.5 M614.2,407.5 611.2,410.1 610.4,414.4 611.9,418.4 615.1,418.9 618.1,416.7 619.2,412.0 617.4,408.4 614.2,407.5 M614.2,407.5 620.5,406.8 M620.5,406.8 621.4,417.7 M620.6,410.1 623.0,406.1 625.5,406.0 626.7,409.6 627.1,416.1 M626.2,408.6 628.4,404.7 631.3,404.5 632.0,408.1 632.8,414.6 M632.8,414.6 634.2,409.0 M634.2,409.0 642.4,406.2 641.3,403.0 637.9,402.3 635.0,404.8 634.3,408.9 635.9,412.9 639.7,413.3 642.6,410.7 M642.6,410.7 643.7,400.4 M643.7,400.4 644.6,411.1 M644.3,404.6 646.4,400.2 649.7,398.8 651.9,400.4 652.6,409.0 M656.3,389.5 657.6,406.2 659.8,407.2 661.4,406.2 M653.6,398.0 659.7,396.4" stroke="#3e8f3b" stroke-width="1.15" fill="none" stroke-linecap="round" stroke-linejoin="round"/>
<path d="M606.2 428 L662 413.2" stroke="#3e8f3b" stroke-width="1.4" fill="none" stroke-linecap="round" stroke-linejoin="round"/>
<path d="M611 432.5 L659 423" stroke="#3e8f3b" stroke-width="1.4" fill="none" stroke-linecap="round" stroke-linejoin="round"/>
<path d="M548 444.2 L688.2 436.8" stroke="#3e8f3b" stroke-width="1.3" fill="none" stroke-linecap="round" stroke-linejoin="round"/>
<path d="M549.2,467.6 548.0,474.1 M548.7,469.5 551.4,467.6 553.5,467.9 553.4,470.2 552.7,474.1 M553.8,469.5 556.0,467.6 558.1,467.9 558.4,470.2 557.5,474.1 M557.5,474.1 560.0,470.9 M560.0,470.9 566.9,470.5 566.8,468.7 564.3,467.8 561.2,468.7 559.8,470.9 560.7,473.1 563.6,473.9 566.6,473.0 M572.6,463.4 570.8,472.9 572.4,473.8 574.0,473.5 M569.3,467.8 574.6,467.8 M583.7,468.1 581.2,467.1 577.8,468.1 576.4,471.1 577.5,473.6 580.7,473.8 583.2,471.4 M584.1,467.1 583.2,473.8" stroke="#3272a2" stroke-width="1.15" fill="none" stroke-linecap="round" stroke-linejoin="round"/>
<path d="M613.3,457.2 610.4,454.8 606.7,456.8 605.8,463.1 611.5,468.5 611.4,472.0 608.1,473.7 604.3,472.5 M618.0,454.1 615.9,471.1 617.5,472.6 619.0,472.0 M614.6,462.1 619.8,461.7 M619.8,461.7 621.4,462.9 M621.4,462.9 620.6,472.4 M620.9,467.2 623.6,463.7 626.1,462.6 627.0,463.0 M627.0,463.0 628.8,463.0 M628.8,463.0 627.9,470.2 629.9,472.4 632.4,472.2 634.7,469.2 M635.2,462.5 634.2,472.1 M634.2,472.1 643.6,463.0 M643.6,463.0 640.8,461.8 637.6,463.4 636.4,466.8 637.3,470.3 640.2,471.2 642.5,469.7 M648.7,453.7 646.7,469.3 648.1,470.7 649.9,470.1 M645.2,461.1 650.1,460.7 M650.1,460.7 652.4,460.7 M652.4,460.7 651.6,467.9 653.3,470.1 656.1,469.9 658.4,466.9 M658.9,460.3 658.0,469.8 M658.0,469.8 660.9,460.3 M660.9,460.3 659.6,470.5 M660.0,464.9 662.5,461.2 665.1,460.0 666.3,460.4 M666.3,460.4 667.5,465.0 M667.5,465.0 673.8,464.1 673.8,461.2 671.4,459.9 668.6,461.6 667.2,465.0 667.9,468.6 670.7,469.6 673.7,467.9" stroke="#3272a2" stroke-width="1.15" fill="none" stroke-linecap="round" stroke-linejoin="round"/>
<path d="M790 413 Q781 417 779 427 L750.2 474" stroke="#3272a2" stroke-width="1.3" fill="none" stroke-linecap="round" stroke-linejoin="round"/>
<path d="M549.3,505.7 548.1,512.7 550.5,514.9 553.9,514.7 556.6,511.8 M557.4,505.3 556.6,514.5 M567.1,506.6 564.2,505.5 560.3,506.6 559.9,508.7 566.1,510.6 566.3,512.7 562.9,513.9 558.8,513.3 M577.5,506.8 574.2,505.7 570.3,507.2 568.6,511.0 570.2,514.0 574.1,514.0 576.9,511.0 M578.1,505.5 576.9,513.9 M582.8,494.7 580.2,513.6 M580.2,513.6 584.9,504.2 M584.9,504.2 583.5,513.4 M585.8,497.7 586.0,498.8 M591.2,496.7 589.7,511.3 591.2,512.6 593.1,512.0 M587.2,503.6 593.6,503.2 M593.6,503.2 596.5,504.0 M596.5,504.0 599.8,512.1 M605.5,503.6 598.8,514.6 596.6,517.2" stroke="#3272a2" stroke-width="1.15" fill="none" stroke-linecap="round" stroke-linejoin="round"/>
<path d="M548 527.4 L592 526 Q598 524 600 518" stroke="#3272a2" stroke-width="2.1" fill="none" stroke-linecap="round" stroke-linejoin="round"/>
<path d="M548.9,542.0 547.4,550.3 M548.5,544.0 551.7,542.2 556.1,542.0 558.8,543.5 558.4,545.6 555.2,547.2 550.9,547.2 548.1,545.9 M570.6,542.3 567.3,541.5 562.6,542.3 560.8,544.8 562.6,546.9 566.9,547.0 570.1,545.0 M571.3,541.5 570.3,547.0 M570.3,547.0 573.3,542.3 M573.3,542.3 572.5,547.3 M573.0,544.5 576.3,542.8 579.9,542.3 581.3,542.5 M581.3,542.5 585.1,541.9 M585.1,541.9 584.2,547.2 M585.9,538.1 586.1,538.8 M596.5,542.1 592.9,541.3 588.9,541.9 588.5,543.2 595.3,544.7 595.7,546.2 591.9,546.8 587.0,546.3 M604.0,541.6 600.1,542.5 598.2,544.4 599.3,546.5 603.0,547.2 606.7,546.5 608.5,544.4 607.4,542.5 603.9,541.6 M611.3,542.1 610.2,546.9 M610.8,544.0 613.9,542.3 618.5,542.1 620.3,543.0 619.8,546.9" stroke="#3272a2" stroke-width="1.15" fill="none" stroke-linecap="round" stroke-linejoin="round"/>
<path d="M669.6,553.5 656.3,539.6 657.6,530.3 663.5,529.2 665.5,533.8 653.8,547.1 654.6,552.3 659.9,553.5 668.8,547.1" stroke="#3272a2" stroke-width="1.15" fill="none" stroke-linecap="round" stroke-linejoin="round"/>
<path d="M548 562.9 L594 558" stroke="#3272a2" stroke-width="2.3" fill="none" stroke-linecap="round" stroke-linejoin="round"/>
<path d="M549.0,577.2 548.1,585.4 M548.8,579.6 552.2,577.0 555.4,577.2 556.0,580.1 555.5,585.0 M556.4,579.2 559.7,576.6 563.1,576.8 563.6,579.7 563.0,584.6 M563.0,584.6 568.2,576.2 M568.2,576.2 567.4,584.0 M569.1,570.5 569.4,571.5 M582.3,576.6 578.2,575.7 573.1,577.0 571.0,579.7 572.2,582.5 577.1,583.1 581.6,581.8 M594.6,576.1 590.8,575.2 586.3,576.2 585.4,578.1 593.6,579.7 594.2,581.6 589.9,582.7 583.9,582.3" stroke="#3272a2" stroke-width="1.15" fill="none" stroke-linecap="round" stroke-linejoin="round"/>
<path d="M706 505.9 L725.9 499.7" stroke="#3272a2" stroke-width="1.4" fill="none" stroke-linecap="round" stroke-linejoin="round"/>
<path d="M733.1,514.0 736.2,491.0 745.8,490.5 753.2,496.6 752.8,505.7 746.4,512.1 738.1,513.7 733.5,514.0 M756.7,507.3 771.5,506.0 771.2,502.8 765.4,501.5 758.6,503.5 756.3,507.4 758.1,511.4 765.3,512.3 771.2,510.4 M791.6,488.9 787.4,487.1 783.3,490.4 780.7,511.0 M776.2,499.9 789.3,499.2 M789.3,499.2 796.2,499.6 M796.2,499.6 794.8,510.5 M797.3,491.8 797.7,493.2" stroke="#3272a2" stroke-width="1.15" fill="none" stroke-linecap="round" stroke-linejoin="round"/>
<path d="M748.2 520.8 L786 513.3" stroke="#3272a2" stroke-width="2.2" fill="none" stroke-linecap="round" stroke-linejoin="round"/>
<path d="M687.3 575.5 L707.2 570.5" stroke="#3272a2" stroke-width="1.4" fill="none" stroke-linecap="round" stroke-linejoin="round"/>
<path d="M719.8,584.6 729.8,556.3 734.3,583.4 M723.9,575.6 732.0,574.9 M732.0,574.9 738.6,568.6 M738.6,568.6 737.7,578.9 740.7,582.1 744.7,581.7 748.2,577.3 M749.4,567.7 748.0,581.4 M757.5,556.2 755.0,579.0 757.6,581.0 760.1,580.0 M751.8,567.1 760.6,566.3 M765.0,551.6 762.7,580.3 M763.4,572.1 767.4,566.9 772.5,565.8 774.6,568.3 773.6,579.4 M773.6,579.4 783.0,565.0 M783.0,565.0 778.9,567.5 777.0,572.6 777.9,577.8 781.7,579.2 786.4,577.1 788.5,571.6 787.4,566.7 783.2,565.0 M783.2,565.0 791.9,564.3 M791.9,564.3 790.7,577.7 M791.5,570.3 794.8,565.4 799.0,563.7 800.7,564.2" stroke="#3272a2" stroke-width="1.15" fill="none" stroke-linecap="round" stroke-linejoin="round"/>
<rect x="625" y="576.8" width="85.5" height="4" rx="2" fill="#ffffff"/>
</svg>
</div>
<svg class="abs" style="left:667px;top:0" width="133" height="73" viewBox="667 0 133 73">
<defs><filter id="bl" x="-10%" y="-10%" width="120%" height="120%"><feGaussianBlur stdDeviation="1.1"/></filter><filter id="bl2" x="-20%" y="-20%" width="140%" height="140%"><feGaussianBlur stdDeviation="0.7"/></filter><filter id="bl3" x="-50%" y="-50%" width="200%" height="200%"><feGaussianBlur stdDeviation="1.5"/></filter><linearGradient id="vbg" x1="0" x2="1" y1="0" y2="0"><stop offset="0" stop-color="#24140a"/><stop offset="0.3" stop-color="#6a3a16"/><stop offset="0.5" stop-color="#8a4e1c"/><stop offset="0.75" stop-color="#7a4418"/><stop offset="1" stop-color="#5a3012"/></linearGradient><radialGradient id="face" cx="0.42" cy="0.4" r="0.7"><stop offset="0" stop-color="#aaa4aa"/><stop offset="0.6" stop-color="#928a92"/><stop offset="1" stop-color="#5e565c"/></radialGradient></defs>
<rect x="667" y="0" width="133" height="73" fill="url(#vbg)"/>
<g filter="url(#bl)">
<rect x="667" y="0" width="24" height="73" fill="#1e1008"/>
<path d="M669 5 L690 6.5" stroke="#8a5020" stroke-width="1.1"/>
<path d="M669 14 L690 15.5" stroke="#8a5020" stroke-width="1.1"/>
<path d="M669 23 L690 24.5" stroke="#8a5020" stroke-width="1.1"/>
<path d="M669 32 L690 33.5" stroke="#8a5020" stroke-width="1.1"/>
<path d="M669 41 L690 42.5" stroke="#8a5020" stroke-width="1.1"/>
<path d="M669 50 L690 51.5" stroke="#8a5020" stroke-width="1.1"/>
<path d="M675 0 L675 62" stroke="#4a2a10" stroke-width="1.2"/>
<path d="M686 0 L686 62" stroke="#4a2a10" stroke-width="1.2"/>
<path d="M690 0 L713 0 L713 30 L692 18 Z" fill="#4a2810"/>
<path d="M691 6 Q702 12 712 26" stroke="#b87834" stroke-width="2.2" fill="none"/>
<path d="M692 22 L712 32 L712 52 L692 44 Z" fill="#8a4e1e"/>
<path d="M692 44 L713 50 L713 70 L690 72 Z" fill="#d08034"/>
<ellipse cx="729" cy="4" rx="6" ry="3" fill="#e8b060"/>
<rect x="747" y="0" width="53" height="28" fill="#6a3c18"/>
<rect x="752" y="2" width="2.2" height="22" fill="#d8b880"/>
<rect x="758" y="2" width="2.2" height="22" fill="#a87840"/>
<rect x="764" y="2" width="2.2" height="22" fill="#e0c490"/>
<rect x="771" y="2" width="2.2" height="22" fill="#b08048"/>
<rect x="778" y="2" width="2.2" height="22" fill="#dcc088"/>
<rect x="786" y="2" width="2.2" height="22" fill="#a87c48"/>
<rect x="794" y="2" width="2.2" height="22" fill="#d8b880"/>
<ellipse cx="768" cy="10" rx="3" ry="2" fill="#f0c070"/><ellipse cx="788" cy="4" rx="3" ry="2" fill="#f0c070"/>
<rect x="747" y="26" width="53" height="7" fill="#a8682c"/>
<rect x="747" y="33" width="53" height="10" fill="#5a3214"/>
<rect x="747" y="42" width="53" height="5" fill="#c87c34"/>
<rect x="747" y="47" width="53" height="8" fill="#9a5a24"/>
<rect x="747" y="54" width="53" height="19" fill="#d88c3c"/>
<path d="M756 73 L756 55 L770 55 L770 73" stroke="#4a2810" stroke-width="2.5" fill="none"/>
<path d="M782 73 L782 52 L796 52 L796 73" stroke="#4a2810" stroke-width="2.5" fill="none"/>
<rect x="758" y="58" width="10" height="6" fill="#6a3814"/>
</g>
<g filter="url(#bl2)">
<path d="M694 73 Q699 60 717 54 Q731 62 745 55 Q766 60 774 73 Z" fill="#141213"/>
<path d="M712 33 Q711 9 731.5 8.5 Q747 9 746.5 31 L746 40 Q740 34 731 34 Q720 34 713 40 Z" fill="#2e2420"/>
<path d="M714 31 Q714 13 731 12.5 Q745 13 745 31 L745 44 Q743 56 731 59 Q719 56 715.5 45 Z" fill="url(#face)"/>
</g>
<g filter="url(#bl3)">
<ellipse cx="724" cy="31.5" rx="4.5" ry="1.8" fill="#4a4448"/><ellipse cx="737.5" cy="31.5" rx="4.5" ry="1.8" fill="#4a4448"/>
<ellipse cx="733" cy="40" rx="2.2" ry="5" fill="#7a7078"/>
<ellipse cx="730.5" cy="47.5" rx="6" ry="1.4" fill="#5a4a4e"/>
<ellipse cx="742" cy="40" rx="3" ry="9" fill="#6a6068"/>
<ellipse cx="728" cy="20" rx="7" ry="5" fill="#bcb4b8"/>
</g>
<path d="M722 56 L724.5 73 M741 57 L738.5 73" stroke="#a8c0d8" stroke-width="0.7" fill="none" opacity="0.8"/>
<path d="M667 54 L686 62.5 L667 62.5 Z" fill="#f0f0f0"/><path d="M667 62.5 L686 62.5 L667 73 Z" fill="#8c8c8c"/>
<text x="669" y="69.8" font-family="Liberation Sans" font-weight="bold" font-size="8" fill="#ffffff" stroke="#111" stroke-width="0.35" paint-order="stroke" textLength="32.5" lengthAdjust="spacingAndGlyphs">Nate Stein</text>
</svg>
<div class="abs" style="left:670.5px;top:73px;width:49px;height:7.5px;border-radius:0 0 7px 7px;background:#b5a6e6"></div>
<div class="abs" style="left:786px;top:73px;width:14px;height:7px;background:#f0f0f0"></div>
<div class="abs" style="left:783.5px;top:110.8px;width:17px;height:69px;border-radius:8px 0 0 8px;background:#5c5c5c"></div>
<svg class="abs" style="left:783px;top:110px" width="17" height="70"><path d="M12 27.5 L6.5 36.5 L12 45.5" stroke="#ffffff" stroke-width="2.4" fill="none" stroke-linecap="round" stroke-linejoin="round"/></svg>
</body></html>
